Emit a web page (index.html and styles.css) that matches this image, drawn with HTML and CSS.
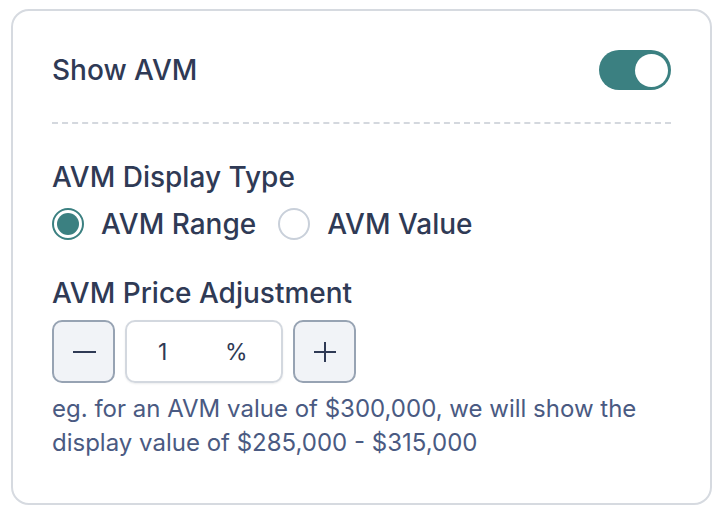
FILE: index.html
```html
<!DOCTYPE html>
<html>
<head>
<meta charset="utf-8">
<link rel="stylesheet" href="styles.css">
</head>
<body>
<div class="card">
  <div class="row-top">
    <span class="title">Show AVM</span>
    <span class="toggle"><span class="knob"></span></span>
  </div>
  <div class="divider"></div>
  <div class="label">AVM Display Type</div>
  <div class="radios">
    <div class="radio-item"><span class="radio checked"><span class="dot"></span></span><span class="radio-text">AVM Range</span></div>
    <div class="radio-item"><span class="radio"></span><span class="radio-text">AVM Value</span></div>
  </div>
  <div class="label label-2">AVM Price Adjustment</div>
  <div class="stepper">
    <button class="step-btn" aria-label="decrease">
      <svg width="24" height="24" viewBox="0 0 24 24"><path d="M1 12H24" stroke="#2f3a55" stroke-width="2" fill="none"/></svg>
    </button>
    <div class="value-box"><span class="num">1</span><span class="pct">%</span></div>
    <button class="step-btn" aria-label="increase">
      <svg width="24" height="24" viewBox="0 0 24 24"><path d="M1 12H23M12 2V22" stroke="#2f3a55" stroke-width="2" fill="none"/></svg>
    </button>
  </div>
  <p class="help">eg. for an AVM value of $300,000, we will show the display value of $285,000 - $315,000</p>
</div>
</body>
</html>
```
FILE: styles.css
```css
html, body {
  margin: 0;
  padding: 0;
  background: #ffffff;
}
body {
  font-family: Inter, "Noto Sans", sans-serif;
  color: #2f3a55;
  padding: 9px 0 0 11px;
}
.card {
  box-sizing: border-box;
  width: 701px;
  height: 496px;
  border: 2px solid #d6dae0;
  border-radius: 18px;
  padding: 39px 39px 0 39px;
}
.row-top {
  display: flex;
  justify-content: space-between;
  align-items: center;
  height: 40px;
}
.title {
  font-size: 28px;
  font-weight: 500;
  line-height: 32px;
}
.toggle {
  box-sizing: border-box;
  width: 72px;
  height: 40px;
  border-radius: 20px;
  background: #3b8081;
  display: flex;
  align-items: center;
  justify-content: flex-end;
  padding-right: 3px;
}
.knob {
  width: 33px;
  height: 33px;
  border-radius: 50%;
  background: #ffffff;
}
.divider {
  margin-top: 32px;
  border-top: 2px dashed #d4d8de;
}
.label {
  margin-top: 37px;
  font-size: 28px;
  font-weight: 500;
  line-height: 32px;
}
.radios {
  margin-top: 15px;
  display: flex;
  gap: 22px;
  height: 32px;
}
.radio-item {
  display: flex;
  align-items: center;
  gap: 17px;
}
.radio {
  box-sizing: border-box;
  width: 32px;
  height: 32px;
  border-radius: 50%;
  border: 2px solid #c9d0da;
  display: flex;
  align-items: center;
  justify-content: center;
}
.radio.checked {
  border-color: #3b8081;
}
.dot {
  width: 22px;
  height: 22px;
  border-radius: 50%;
  background: #3b8081;
}
.radio-text {
  font-size: 28px;
  font-weight: 500;
  line-height: 32px;
}
.label-2 {
  margin-top: 37px;
}
.stepper {
  margin-top: 11px;
  display: flex;
  gap: 10px;
}
.step-btn {
  box-sizing: border-box;
  width: 63px;
  height: 63px;
  border: 2px solid #97a3b3;
  border-radius: 10px;
  background: #f1f3f7;
  display: flex;
  align-items: center;
  justify-content: center;
  padding: 0;
}
.value-box {
  box-sizing: border-box;
  width: 158px;
  height: 63px;
  border: 2px solid #d3d8df;
  border-radius: 10px;
  box-shadow: 0 1px 2px rgba(16, 24, 40, 0.08);
  display: flex;
  align-items: center;
  padding-left: 31px;
  font-size: 23px;
  color: #2f3a55;
}
.num {
  width: 12px;
}
.pct {
  margin-left: 55px;
}
.help {
  margin: 9px 0 0 0;
  font-size: 24px;
  line-height: 34px;
  color: #4a5a82;
}
```
